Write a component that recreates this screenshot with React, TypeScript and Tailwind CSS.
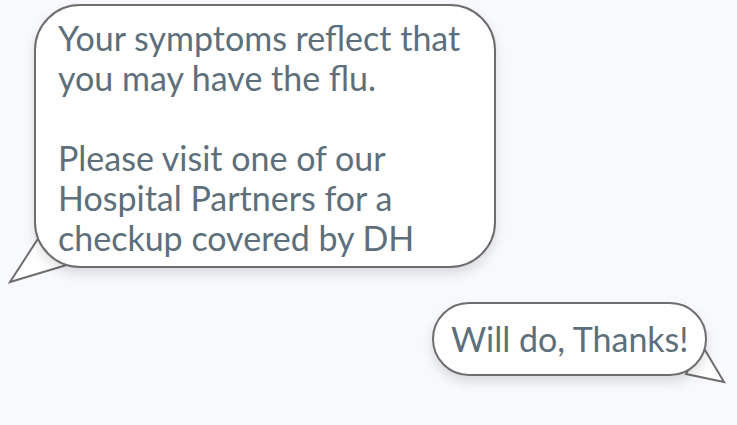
const Tail = ({ className, points }: { className: string; points: string }) => (
  <svg className={`absolute ${className}`} viewBox="0 0 70 60" fill="none">
    <polygon points={points} fill="#ffffff" stroke="#6e6e6e" strokeWidth="2" strokeLinejoin="miter" />
  </svg>
)

export default function App() {
  return (
    <div
      className="w-[737px] h-[425px] overflow-hidden bg-[#f8f9fd] flex flex-col text-[34px] leading-[40px] text-[#5d6f7b]"
      style={{ fontFamily: 'Lato, "Open Sans", sans-serif' }}
    >
      <div className="relative ml-[34px] mt-[4px] w-[462px]">
        <Tail className="left-[-26px] top-[225px] w-[70px] h-[60px]" points="2,53 33,5 62,35" />
        <div className="relative h-[264px] rounded-[46px] border-2 border-[#6e6e6e] bg-white pl-[22px] pt-[12px] shadow-[0_6px_12px_rgba(0,0,0,0.12)]">
          <p>Your symptoms reflect that</p>
          <p>you may have the flu.</p>
          <p>&nbsp;</p>
          <p>Please visit one of our</p>
          <p>Hospital Partners for a</p>
          <p>checkup covered by DH</p>
        </div>
      </div>

      <div className="relative self-end mr-[30px] mt-[34px] w-[275px]">
        <Tail className="left-[248px] top-[38px] w-[70px] h-[60px]" points="44,42 22,5 6,34" />
        <div className="relative h-[74px] rounded-full border-2 border-[#6e6e6e] bg-white flex items-center pl-[17px] shadow-[0_6px_12px_rgba(0,0,0,0.12)]">
          Will do, Thanks!
        </div>
      </div>
    </div>
  )
}
